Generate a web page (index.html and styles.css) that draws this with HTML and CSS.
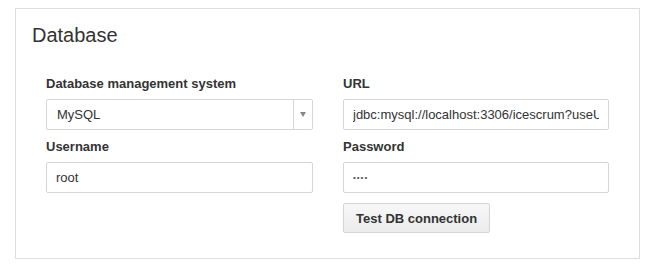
FILE: index.html
```html
<!DOCTYPE html>
<html lang="en">
<head>
  <meta charset="UTF-8">
  <title>Database settings</title>
  <link rel="stylesheet" href="styles.css">
</head>
<body>
  <div class="panel">
    <h2 class="panel-title">Database</h2>

    <div class="form-grid">
      <div class="form-group">
        <label for="dbms">Database management system</label>
        <div class="select-wrap">
          <select id="dbms">
            <option>MySQL</option>
            <option>PostgreSQL</option>
            <option>H2</option>
          </select>
        </div>
      </div>

      <div class="form-group">
        <label for="url">URL</label>
        <input type="text" id="url" value="jdbc:mysql://localhost:3306/icescrum?useUnicode=true&amp;characterEncoding=utf8">
      </div>

      <div class="form-group">
        <label for="username">Username</label>
        <input type="text" id="username" value="root">
      </div>

      <div class="form-group">
        <label for="password">Password</label>
        <input type="password" id="password" value="root">
      </div>

      <div class="form-actions">
        <button type="button">Test DB connection</button>
      </div>
    </div>
  </div>
</body>
</html>
```

FILE: styles.css
```css
:root {
  --text-color: #333333;
  --border-color: #dddddd;
  --input-border: #d6d6d6;
}

* {
  box-sizing: border-box;
  margin: 0;
  padding: 0;
}

body {
  font-family: 'Liberation Sans', Arial, sans-serif;
  background: #ffffff;
  color: var(--text-color);
  padding: 8px 11px 0 15px;
}

.panel {
  border: 1px solid var(--border-color);
  width: 625px;
  height: 251px;
  padding: 15px 29px 0 30px;
}

.panel-title {
  font-size: 20px;
  font-weight: normal;
  line-height: 22px;
  margin-left: -14px;
  margin-bottom: 29px;
}

.form-grid {
  display: grid;
  grid-template-columns: 267px 266px;
  column-gap: 30px;
  row-gap: 8px;
}

.form-group {
  display: flex;
  flex-direction: column;
}

label {
  font-size: 13px;
  font-weight: bold;
  line-height: 18px;
  margin-bottom: 6px;
}

input,
select {
  font-family: inherit;
  font-size: 13px;
  color: var(--text-color);
  height: 31px;
  width: 100%;
  padding: 0 9px;
  border: 1px solid var(--input-border);
  border-radius: 2px;
  background: #ffffff;
  outline: none;
}

input[type="password"] {
  font-size: 8px;
  letter-spacing: 1px;
  color: #555555;
}

select {
  appearance: none;
  -webkit-appearance: none;
  padding-left: 10px;
}

.select-wrap {
  position: relative;
}

.select-wrap::after {
  content: "";
  position: absolute;
  top: 1px;
  bottom: 1px;
  right: 1px;
  width: 18px;
  border-left: 1px solid var(--input-border);
  background: #ffffff;
}

.select-wrap::before {
  content: "";
  position: absolute;
  z-index: 1;
  top: 13px;
  right: 7px;
  border-left: 3px solid transparent;
  border-right: 3px solid transparent;
  border-top: 5px solid #888888;
}

.form-actions {
  grid-column: 2;
  margin-top: 2px;
}

button {
  font-family: inherit;
  font-size: 13px;
  font-weight: bold;
  color: var(--text-color);
  height: 30px;
  padding: 0 12px;
  background: linear-gradient(#f7f7f7, #ececec);
  border: 1px solid #d4d4d4;
  border-radius: 2px;
  cursor: pointer;
}
```
